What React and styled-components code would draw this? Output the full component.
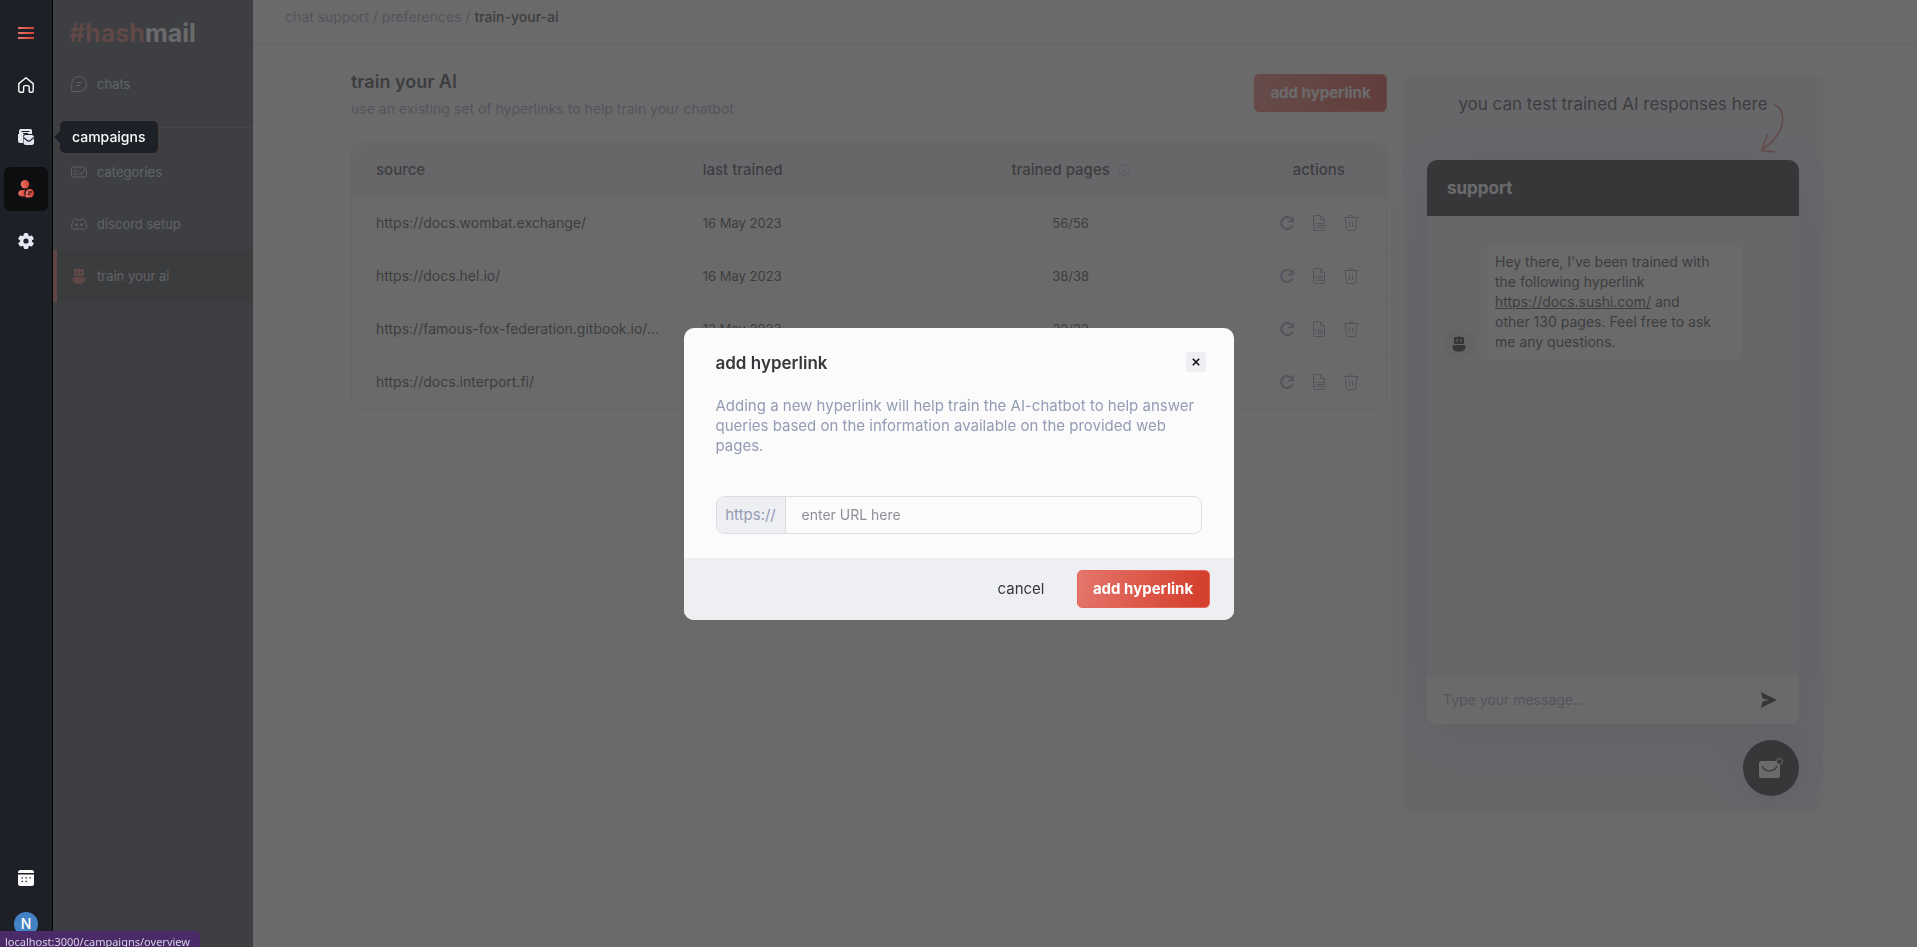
import { useState } from "react";
import styled, { createGlobalStyle } from "styled-components";

const rows = [
  { source: "https://docs.wombat.exchange/", date: "16 May 2023", pages: "56/56" },
  { source: "https://docs.hel.io/", date: "16 May 2023", pages: "38/38" },
  { source: "https://famous-fox-federation.gitbook.io/…", date: "12 May 2023", pages: "22/22" },
  { source: "https://docs.interport.fi/", date: "12 May 2023", pages: "18/18" },
];

export default function App() {
  const [url, setUrl] = useState("");
  const [message, setMessage] = useState("");

  return (
    <>
      <GlobalStyle />
      <Styled.Page>
        {/* Left rail */}
        <Styled.Rail>
          <Styled.RailButton aria-label="menu"><MenuIcon /></Styled.RailButton>
          <Styled.RailButton aria-label="home"><HomeIcon /></Styled.RailButton>
          <Styled.RailButton aria-label="campaigns">
            <CampaignIcon />
            <Styled.Tooltip>campaigns</Styled.Tooltip>
          </Styled.RailButton>
          <Styled.RailButton aria-label="chat support" $active><SupportIcon /></Styled.RailButton>
          <Styled.RailButton aria-label="settings"><GearIcon /></Styled.RailButton>
          <Styled.RailBottom>
            <Styled.RailButton aria-label="calendar"><CalendarIcon /></Styled.RailButton>
            <Styled.Avatar>N</Styled.Avatar>
          </Styled.RailBottom>
        </Styled.Rail>

        {/* Sidebar */}
        <Styled.Sidebar>
          <Styled.Logo><span>#hash</span>mail</Styled.Logo>
          <Styled.SideLink href="#chats"><ChatIcon />chats</Styled.SideLink>
          <Styled.Divider />
          <Styled.SideLink href="#categories"><CategoryIcon />categories</Styled.SideLink>
          <Styled.SideLink href="#discord"><DiscordIcon />discord setup</Styled.SideLink>
          <Styled.SideLink href="#train" $active><RobotIcon fill="#cf6a62" />train your ai</Styled.SideLink>
        </Styled.Sidebar>

        <Styled.Main>
          <Styled.Crumbs>
            chat support / preferences / <strong>train-your-ai</strong>
          </Styled.Crumbs>

          <Styled.Content>
            <Styled.Links>
              <Styled.Heading>
                <div>
                  <Styled.Title>train your AI</Styled.Title>
                  <Styled.Subtitle>use an existing set of hyperlinks to help train your chatbot</Styled.Subtitle>
                </div>
                <Styled.PrimaryButton>add hyperlink</Styled.PrimaryButton>
              </Styled.Heading>

              <Styled.TableBox>
                <Styled.Table>
                  <colgroup>
                    <col width="31.6%" />
                    <col width="20.4%" />
                    <col width="35%" />
                    <col width="13%" />
                  </colgroup>
                  <thead>
                    <tr>
                      <Styled.Th>source</Styled.Th>
                      <Styled.Th>last trained</Styled.Th>
                      <Styled.Th $center>
                        <Styled.ThLabel>trained pages <InfoIcon /></Styled.ThLabel>
                      </Styled.Th>
                      <Styled.Th $center>actions</Styled.Th>
                    </tr>
                  </thead>
                  <tbody>
                    {rows.map((row) => (
                      <tr key={row.source}>
                        <Styled.Td $wide>{row.source}</Styled.Td>
                        <Styled.Td>{row.date}</Styled.Td>
                        <Styled.Td $center>{row.pages}</Styled.Td>
                        <Styled.Td $center>
                          <Styled.Actions>
                            <Styled.IconButton aria-label="retrain"><RefreshIcon /></Styled.IconButton>
                            <Styled.IconButton aria-label="pages"><FileIcon /></Styled.IconButton>
                            <Styled.IconButton aria-label="delete"><TrashIcon /></Styled.IconButton>
                          </Styled.Actions>
                        </Styled.Td>
                      </tr>
                    ))}
                  </tbody>
                </Styled.Table>
              </Styled.TableBox>
            </Styled.Links>

            {/* Chat preview */}
            <Styled.Preview>
              <Styled.PreviewNote>
                you can test trained AI responses here
                <ArrowIcon />
              </Styled.PreviewNote>
              <Styled.Widget>
                <Styled.WidgetHeader>support</Styled.WidgetHeader>
                <Styled.WidgetBody>
                  <Styled.BotAvatar><RobotIcon fill="#222224" /></Styled.BotAvatar>
                  <Styled.Bubble>
                    Hey there, I’ve been trained with the following hyperlink{" "}
                    <a href="#docs">https://docs.sushi.com/</a> and other 130 pages. Feel free to ask
                    me any questions.
                  </Styled.Bubble>
                </Styled.WidgetBody>
                <Styled.WidgetFooter>
                  <Styled.MessageInput
                    aria-label="message"
                    placeholder="Type your message..."
                    value={message}
                    onChange={(e) => setMessage(e.target.value)}
                  />
                  <Styled.IconButton aria-label="send"><SendIcon /></Styled.IconButton>
                </Styled.WidgetFooter>
              </Styled.Widget>
              <Styled.Launcher aria-label="open chat"><MailIcon /></Styled.Launcher>
            </Styled.Preview>
          </Styled.Content>
        </Styled.Main>
      </Styled.Page>

      {/* Modal */}
      <Styled.Overlay>
        <Styled.Modal role="dialog" aria-labelledby="modal-title">
          <Styled.ModalBody>
            <Styled.ModalHeader>
              <Styled.ModalTitle id="modal-title">add hyperlink</Styled.ModalTitle>
              <Styled.Close aria-label="close"><CloseIcon /></Styled.Close>
            </Styled.ModalHeader>
            <Styled.ModalText>
              Adding a new hyperlink will help train the AI-chatbot to help answer queries based on
              the information available on the provided web pages.
            </Styled.ModalText>
            <Styled.Field>
              <label htmlFor="url">https://</label>
              <input
                id="url"
                placeholder="enter URL here"
                value={url}
                onChange={(e) => setUrl(e.target.value)}
              />
            </Styled.Field>
          </Styled.ModalBody>
          <Styled.ModalFooter>
            <Styled.Cancel>cancel</Styled.Cancel>
            <Styled.PrimaryButton>add hyperlink</Styled.PrimaryButton>
          </Styled.ModalFooter>
        </Styled.Modal>
      </Styled.Overlay>

      <Styled.StatusBar>localhost:3000/campaigns/overview</Styled.StatusBar>
    </>
  );
}

/* Icons */
const MenuIcon = () => (
  <svg width="16" height="12" viewBox="0 0 16 12">
    <defs>
      <linearGradient id="red" x1="0" x2="1">
        <stop offset="0" stopColor="#e5766c" />
        <stop offset="1" stopColor="#d5412f" />
      </linearGradient>
    </defs>
    <path fill="url(#red)" d="M0 0h16v2H0zM0 5h16v2H0zM0 10h16v2H0z" />
  </svg>
);

const HomeIcon = () => (
  <svg width="16" height="16" viewBox="0 0 16 16" fill="none" stroke="#fbfbfb" strokeWidth="1.4" strokeLinejoin="round">
    <path d="M.8 6.6 8 .8l7.2 5.8v7.2a1.4 1.4 0 0 1-1.4 1.4h-1.6a1 1 0 0 1-1-1V10a1.4 1.4 0 0 0-1.4-1.4H7A1.4 1.4 0 0 0 5.6 10v4.2a1 1 0 0 1-1 1H2.2a1.4 1.4 0 0 1-1.4-1.4z" />
  </svg>
);

const CampaignIcon = () => (
  <svg width="16" height="16" viewBox="0 0 16 16">
    <path fill="#e4e7f2" d="M2 0h10.5A1.5 1.5 0 0 1 14 1.5V5H7.5A2.5 2.5 0 0 0 5 7.5V14H2a2 2 0 0 1-2-2V5h1V1.5z" />
    <path fill="none" stroke="#1e2028" d="M3.5 2.5h8M5 4.5h5" />
    <rect x="5.5" y="6" width="10.5" height="10" rx="2.5" fill="#e4e7f2" />
    <path fill="none" stroke="#1e2028" strokeWidth="1.2" d="m5.5 8.500 4 3.200a2 2 0 0 0 2.500 0l4-3.200" />
  </svg>
);

const SupportIcon = () => (
  <svg width="16" height="18" viewBox="0 0 16 18">
    <circle cx="7" cy="4.2" r="4.2" fill="url(#red)" />
    <path fill="url(#red)" d="M4 10h3.500c-1.600 1.800-1.600 4.500 0 6.500H4.500C2 16.500.3 15.300.3 13.200.3 11.400 1.800 10 4 10z" />
    <path fill="url(#red)" d="M11.800 9a4.200 4.200 0 1 1 0 8.400H7.600v-4.200A4.200 4.200 0 0 1 11.800 9z" />
    <path stroke="#0d0e0f" d="M10 12h4.200M9.600 14.200h3" />
  </svg>
);

const GearIcon = () => (
  <svg width="16" height="16" viewBox="0 0 16 16">
    <g fill="#e4e7f2">
      <circle cx="8" cy="8" r="6" />
      <rect x="5.6" y="0" width="4.8" height="16" rx="1.5" />
      <rect x="5.6" y="0" width="4.8" height="16" rx="1.5" transform="rotate(60 8 8)" />
      <rect x="5.6" y="0" width="4.8" height="16" rx="1.5" transform="rotate(120 8 8)" />
    </g>
    <circle cx="8" cy="8" r="2.6" fill="#1e2028" />
  </svg>
);

const CalendarIcon = () => (
  <svg width="16" height="16" viewBox="0 0 16 16">
    <path fill="#fbfbfb" d="M2.5 0h11A2.5 2.5 0 0 1 16 2.500V3H0v-.5A2.500 2.500 0 0 1 2.500 0zM0 4.500h16v9a2.500 2.500 0 0 1-2.500 2.500h-11A2.500 2.500 0 0 1 0 13.500z" />
    <path stroke="#1e2028" strokeWidth="1.3" strokeDasharray="1.4 2.6" d="M3.500 7.800h10M3.500 11.300h5.500" />
  </svg>
);

const ChatIcon = () => (
  <svg width="16" height="16" viewBox="0 0 16 16" fill="none" stroke="#c4c8d2">
    <path d="M8 .5a7.500 7.500 0 1 1 0 15H.7V8A7.500 7.500 0 0 1 8 .5zM5.500 6.500H11M5 9.500h4" />
  </svg>
);

const CategoryIcon = () => (
  <svg width="16" height="12" viewBox="0 0 16 12" fill="none" stroke="#c4c8d2">
    <path d="M12.5 1H2A1.500 1.500 0 0 0 .5 2.500v7A1.500 1.500 0 0 0 2 11h12a1.500 1.500 0 0 0 1.500-1.500V4M2.500 5h4M2.500 8h4M8.500 6 10.500 8.500 15.500.8" />
  </svg>
);

const DiscordIcon = () => (
  <svg width="16" height="13" viewBox="0 0 16 13" fill="none" stroke="#c4c8d2" strokeLinejoin="round">
    <path d="M5.500.8c-1 .1-2 .5-3 1C1.200 4 .4 6.700.6 10c1 .9 2.200 1.600 3.600 2l.9-1.500c1.900.5 3.900.5 5.800 0l.9 1.500c1.400-.4 2.600-1.100 3.600-2 .2-3.300-.6-6-1.900-8.200-1-.5-2-.9-3-1L10 2.200H6z" />
    <circle cx="5.5" cy="6.8" r="1.2" fill="#c4c8d2" stroke="none" />
    <circle cx="10.5" cy="6.8" r="1.2" fill="#c4c8d2" stroke="none" />
  </svg>
);

const RobotIcon = ({ fill }) => (
  <svg width="16" height="16" viewBox="0 0 16 16">
    <path
      fill={fill}
      fillRule="evenodd"
      d="M7.400 0h1.200v1H12a1 1 0 0 1 1 1v5a1 1 0 0 1-1 1H4a1 1 0 0 1-1-1V2a1 1 0 0 1 1-1h3.400zM5.200 3.600v1.800h1.600V3.600zM9.200 3.600v1.800h1.600V3.600zM3 9h10a1.500 1.500 0 0 1 1.500 1.500c0 3-2 5-4.500 5H6c-2.500 0-4.500-2-4.500-5A1.500 1.500 0 0 1 3 9z"
    />
  </svg>
);

const InfoIcon = () => (
  <svg width="12" height="12" viewBox="0 0 12 12" fill="none" stroke="#b4b9ca">
    <circle cx="6" cy="6" r="5.5" />
    <path d="M6 5.200v3.300M6 3.200v1" />
  </svg>
);

const RefreshIcon = () => (
  <svg width="16" height="16" viewBox="0 0 16 16" fill="none" stroke="#949cb5" strokeWidth="2">
    <path d="M13.600 10.500A6 6 0 1 1 12.300 3.800L13.500 5" />
    <path d="M14.200 1.500v5H9" strokeWidth="1.4" />
  </svg>
);

const FileIcon = () => (
  <svg width="12" height="16" viewBox="0 0 12 16" fill="none" stroke="#949cb5">
    <path d="M7.500.5H2A1.500 1.500 0 0 0 .5 2v12A1.500 1.500 0 0 0 2 15.500h8a1.500 1.500 0 0 0 1.500-1.500V4.500zM7.500.5v4h4M4.300 8.500H10M4.300 10.500H10M4.300 12.500H10M2 8.500h1M2 10.500h1M2 12.500h1" />
  </svg>
);

const TrashIcon = () => (
  <svg width="16" height="16" viewBox="0 0 16 16" fill="none" stroke="#949cb5">
    <path d="M.5 2.500h15M2.300 2.500l1 11.500a1.600 1.600 0 0 0 1.600 1.500h6.200a1.600 1.600 0 0 0 1.600-1.500l1-11.500M5.500 2.500C5.500-.2 10.500-.2 10.500 2.500M6.500 6.500v5.500M9.500 6.500v5.500" />
  </svg>
);

const SendIcon = () => (
  <svg width="16" height="16" viewBox="0 0 16 16">
    <path fill="#222224" d="M0 0l16 8L0 16l1.500-6.400L8 8 1.500 6.400z" />
  </svg>
);

const MailIcon = () => (
  <svg width="24" height="20" viewBox="0 0 24 20">
    <rect y="3" width="21" height="17" rx="2.5" fill="#fbfbfb" />
    <path d="M3 8c3 6.500 12 6.500 15 0" fill="none" stroke="#222224" strokeWidth="1.3" />
    <circle cx="20.5" cy="3.5" r="3" fill="#222224" stroke="#fbfbfb" />
  </svg>
);

const ArrowIcon = () => (
  <svg width="24" height="50" viewBox="0 0 24 50" fill="none" stroke="#e0695d" strokeWidth="1.4" strokeLinecap="round">
    <path d="M14 1C24 3 25 19 18 30 13 38 6 43 1.500 46.500M7.500 31 1.500 46.500 15 48" />
  </svg>
);

const CloseIcon = () => (
  <svg width="8" height="8" viewBox="0 0 8 8" fill="none" stroke="#111" strokeWidth="1.6">
    <path d="M.8.8l6.400 6.400M7.200.8.8 7.200" />
  </svg>
);

const GlobalStyle = createGlobalStyle`
  * {
    box-sizing: border-box;
  }

  body {
    margin: 0;
    color: #36383b;
    background: #fbfbfb;
    font-family: Inter, "Open Sans", sans-serif;
    font-size: 14px;
    line-height: 20px;
    overflow: hidden;
  }

  button, input {
    padding: 0;
    border: 0;
    background: none;
    color: inherit;
    font: inherit;
  }

  svg {
    display: block;
    flex: none;
  }
`;

const center = `
  display: flex;
  align-items: center;
  justify-content: center;
`;

const Styled = {
  Page: styled.div`
    display: flex;
    height: 100vh;
  `,

  Rail: styled.nav`
    position: relative;
    z-index: 2;
    display: flex;
    flex-direction: column;
    align-items: center;
    gap: 8px;
    width: 53px;
    padding: 11px 0;
    border-right: 1px solid #000;
    background: #1e2028;
  `,

  RailButton: styled.button`
    ${center}
    position: relative;
    width: 44px;
    height: 44px;
    border-radius: 6px;
    background: ${({ $active }) => ($active ? "#0d0e0f" : "none")};
  `,

  RailBottom: styled.div`
    display: flex;
    flex-direction: column;
    align-items: center;
    gap: 12px;
    margin-top: auto;
  `,

  Avatar: styled.div`
    ${center}
    width: 24px;
    height: 24px;
    border-radius: 50%;
    background: #4382c4;
    color: #fff;
    font-weight: 500;
  `,

  Tooltip: styled.span`
    position: absolute;
    left: 56px;
    top: 6px;
    padding: 6px 12px;
    border-radius: 5px;
    background: #1e2028;
    box-shadow: 0 0 6px rgba(90, 60, 60, 0.5);
    color: #fbfbfb;
    font-weight: 500;

    &::before {
      content: "";
      position: absolute;
      left: -6px;
      top: 10px;
      border: 6px solid transparent;
      border-left: 0;
      border-right-color: #1e2028;
    }
  `,

  Sidebar: styled.aside`
    width: 200px;
    flex: none;
    background: #38424a;
  `,

  Logo: styled.div`
    height: 58px;
    padding: 17px 16px 0;
    color: #fbfbfb;
    font-size: 25px;
    line-height: 32px;
    font-weight: 700;

    span {
      color: #cf6a62;
    }
  `,

  SideLink: styled.a`
    display: flex;
    align-items: center;
    gap: 10px;
    height: 52px;
    padding-left: ${({ $active }) => ($active ? "14px" : "18px")};
    border-left: ${({ $active }) => ($active ? "4px solid #cf6a62" : "0")};
    background: ${({ $active }) => ($active ? "#333436" : "none")};
    color: #d4d8e2;
    font-size: 13px;
    text-decoration: none;
  `,

  Divider: styled.hr`
    margin: 17px 0 18px;
    border: 0;
    border-top: 1px solid #5a626a;
  `,

  Main: styled.main`
    flex: 1;
    min-width: 0;
    background: #fbfbfb;
  `,

  Crumbs: styled.header`
    height: 44px;
    padding: 7px 32px;
    border-bottom: 1px solid #e0e1e6;
    color: #949cb5;

    strong {
      color: #36383b;
      font-weight: 500;
    }
  `,

  Content: styled.div`
    display: flex;
    align-items: flex-start;
    gap: 16px;
    padding: 30px 94px 0 98px;
  `,

  Links: styled.section`
    flex: 1;
  `,

  Heading: styled.div`
    display: flex;
    align-items: flex-start;
    justify-content: space-between;
    height: 69px;
  `,

  Title: styled.h1`
    margin: 0;
    font-size: 18px;
    line-height: 16px;
    font-weight: 600;
  `,

  Subtitle: styled.p`
    margin: 9px 0 0;
    color: #949cb5;
    font-size: 14px;
  `,

  PrimaryButton: styled.button`
    width: 133px;
    height: 38px;
    border: 1px solid #e5675b;
    border-radius: 5px;
    background: linear-gradient(100deg, #e5766c, #d5412f 90%);
    color: #fff;
    font-size: 15px;
    font-weight: 700;
  `,

  TableBox: styled.div`
    overflow: hidden;
    border: 1px solid #e4e5ee;
    border-radius: 10px;
  `,

  Table: styled.table`
    width: 100%;
    table-layout: fixed;
    border-collapse: collapse;
  `,

  Th: styled.th`
    height: 52px;
    padding: 0 0 0 ${({ $center }) => ($center ? "0" : "24px")};
    background: #eeeef7;
    font-size: 15px;
    font-weight: 500;
    text-align: ${({ $center }) => ($center ? "center" : "left")};
  `,

  ThLabel: styled.div`
    ${center}
    gap: 8px;
  `,

  Td: styled.td`
    height: 53px;
    padding: 0 0 0 ${({ $center }) => ($center ? "0" : "24px")};
    border-top: 1px solid #e4e5ee;
    font-size: ${({ $wide }) => ($wide ? "14px" : "13px")};
    text-align: ${({ $center }) => ($center ? "center" : "left")};
  `,

  Actions: styled.div`
    ${center}
    gap: 16px;
  `,

  IconButton: styled.button`
    ${center}
    width: 16px;
    height: 16px;
  `,

  Preview: styled.section`
    display: flex;
    flex-direction: column;
    width: 420px;
    height: 735px;
    margin-top: 2px;
    padding: 18px 24px 0;
    border-radius: 8px;
    background: #eeeef7;
  `,

  PreviewNote: styled.div`
    display: flex;
    justify-content: center;
    height: 66px;
    padding-left: 16px;
    font-size: 17px;
    white-space: nowrap;

    svg {
      margin-top: 10px;
      margin-left: -8px;
    }
  `,

  Widget: styled.div`
    border-radius: 10px;
    box-shadow: 0 8px 60px rgba(120, 130, 170, 0.25);
  `,

  WidgetHeader: styled.div`
    height: 56px;
    padding: 18px 20px;
    border-radius: 10px 10px 0 0;
    background: #222224;
    color: #fbfbfb;
    font-size: 17px;
    font-weight: 700;
  `,

  WidgetBody: styled.div`
    display: flex;
    align-items: flex-end;
    gap: 12px;
    height: 460px;
    padding: 28px 16px 316px;
    background: #eeeef7;
  `,

  BotAvatar: styled.div`
    ${center}
    flex: none;
    width: 32px;
    height: 32px;
    border-radius: 50%;
    background: #dddee3;
  `,

  Bubble: styled.p`
    width: 255px;
    margin: 0;
    padding: 8px 26px 8px 8px;
    border-radius: 8px;
    background: #fbfbfb;

    a {
      color: inherit;
    }
  `,

  WidgetFooter: styled.div`
    display: flex;
    align-items: center;
    height: 48px;
    padding: 0 22px 0 16px;
    border-radius: 0 0 8px 8px;
    background: #fbfbfb;
  `,

  MessageInput: styled.input`
    flex: 1;
    outline: 0;

    &::placeholder {
      color: #949cb5;
      opacity: 1;
    }
  `,

  Launcher: styled.button`
    ${center}
    align-self: flex-end;
    width: 56px;
    height: 56px;
    margin-top: 16px;
    border-radius: 50%;
    background: #222224;
    box-shadow: 0 4px 40px rgba(120, 130, 170, 0.3);
  `,

  Overlay: styled.div`
    ${center}
    position: fixed;
    inset: 0;
    z-index: 1;
    background: rgba(62, 63, 64, 0.77);
  `,

  Modal: styled.div`
    width: 550px;
    overflow: hidden;
    border-radius: 10px;
    background: #fbfbfb;
  `,

  ModalBody: styled.div`
    padding: 24px 32px;
  `,

  ModalHeader: styled.div`
    display: flex;
    align-items: flex-start;
    justify-content: space-between;
    margin-right: -4px;
  `,

  ModalTitle: styled.h2`
    margin: 0;
    font-size: 17px;
    line-height: 22px;
    font-weight: 600;
  `,

  Close: styled.button`
    ${center}
    width: 20px;
    height: 20px;
    border-radius: 4px;
    background: #eeeff3;
  `,

  ModalText: styled.p`
    margin: 22px 0 40px;
    color: #949cb5;
    font-size: 15px;
  `,

  Field: styled.div`
    display: flex;
    height: 38px;
    overflow: hidden;
    border: 1px solid #dcdee3;
    border-radius: 8px;

    label {
      ${center}
      width: 69px;
      border-right: 1px solid #dcdee3;
      background: #eeeff3;
      color: #949cb5;
      font-size: 15px;
    }

    input {
      flex: 1;
      padding: 0 16px;
      outline: 0;
    }

    input::placeholder {
      color: #8c8f96;
      opacity: 1;
    }
  `,

  ModalFooter: styled.div`
    display: flex;
    align-items: center;
    justify-content: flex-end;
    gap: 32px;
    height: 62px;
    padding: 0 24px;
    background: #eeeff3;
  `,

  Cancel: styled.button`
    height: 38px;
    font-size: 15px;
  `,

  StatusBar: styled.div`
    position: fixed;
    left: 0;
    bottom: 0;
    z-index: 3;
    height: 16px;
    padding: 2px 10px 0 5px;
    border-radius: 0 4px 0 0;
    background: #4a2a68;
    color: #d8d2e0;
    font-family: "Noto Sans", "Open Sans", sans-serif;
    font-size: 11px;
    line-height: 18px;
    white-space: nowrap;
  `,
};
